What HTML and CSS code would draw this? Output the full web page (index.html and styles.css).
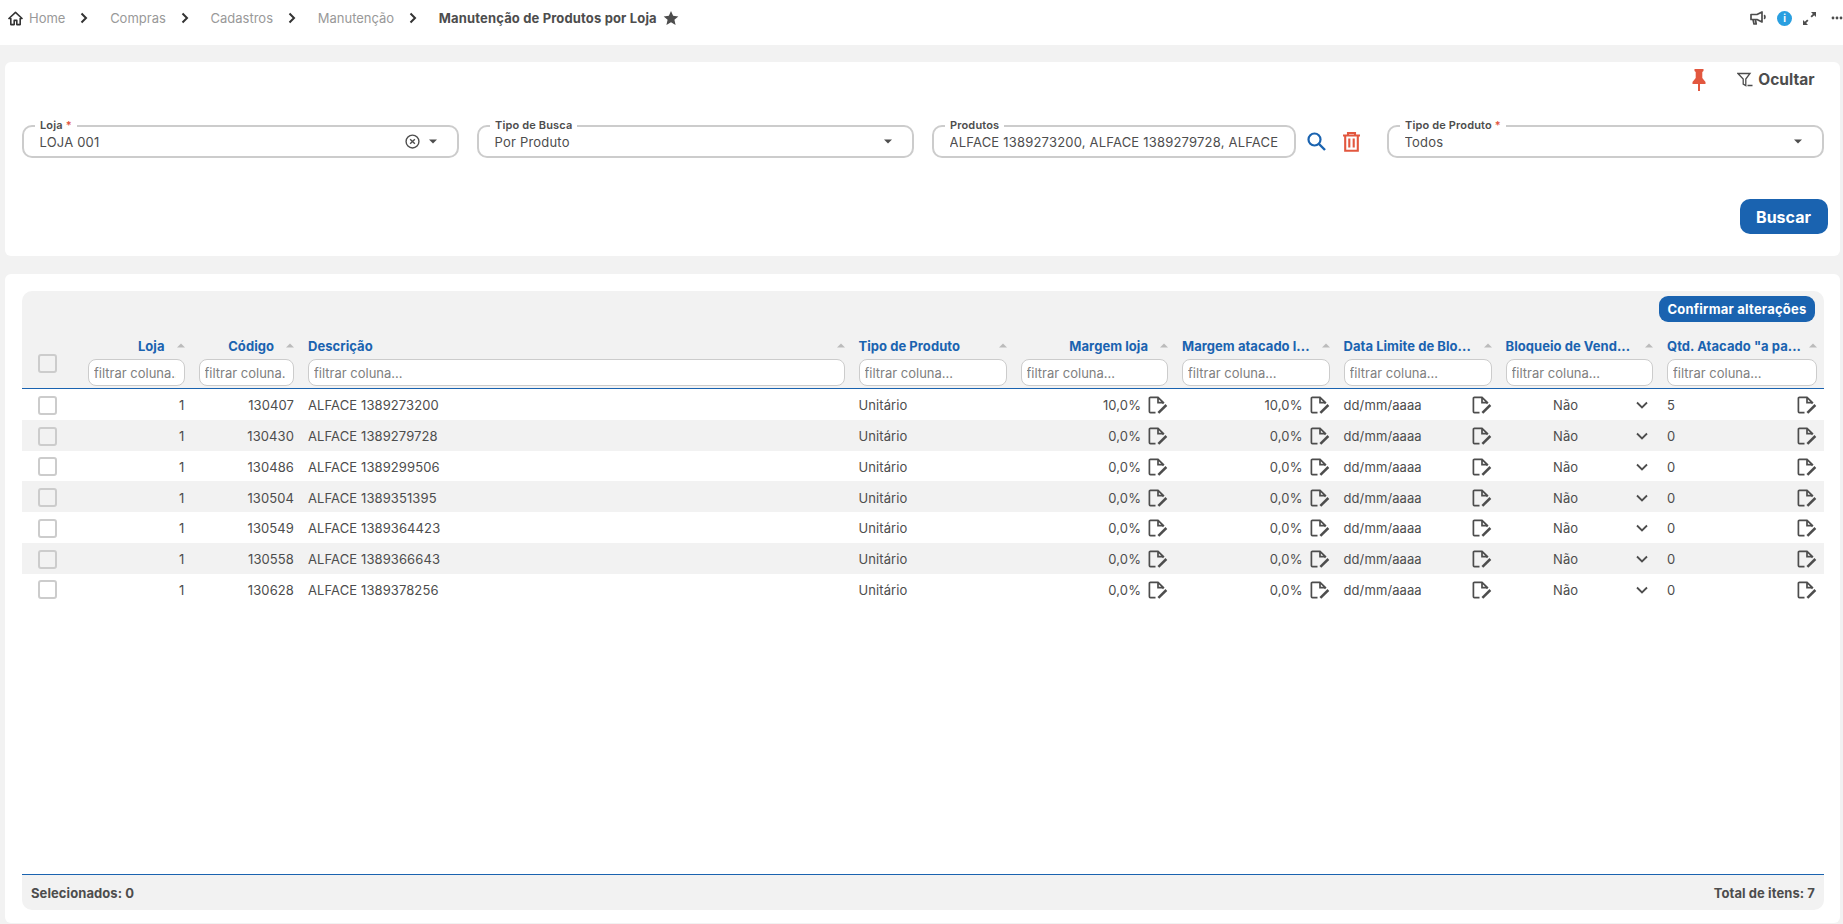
FILE: index.html
```html
<!DOCTYPE html>
<html lang="pt-BR">
<head>
<meta charset="utf-8">
<title>Manutenção de Produtos por Loja</title>
<link rel="stylesheet" href="styles.css">
</head>
<body>
<svg class="defs" width="0" height="0" aria-hidden="true">
  <symbol id="edit" viewBox="0 0 20 18">
    <path d="M7.5 16.6H2.4a1 1 0 0 1-1-1V2.4a1 1 0 0 1 1-1h7.6l5.4 5.2-1 1.2M10 1.6v5h5" fill="none" stroke="currentColor" stroke-width="1.7"/>
    <path d="M10.4 16.8L18.4 9" fill="none" stroke="currentColor" stroke-width="2.5"/>
  </symbol>
  <symbol id="sort" viewBox="0 0 8 5"><path d="M4 .5L8 4.5H0z" fill="currentColor"/></symbol>
  <symbol id="chev" viewBox="0 0 8 12"><path d="M1.5 1.5L6 6l-4.5 4.5" fill="none" stroke="currentColor" stroke-width="2"/></symbol>
  <symbol id="caret" viewBox="0 0 8 5"><path d="M0 .5h8L4 4.5z" fill="currentColor"/></symbol>
</svg>
<header class="topbar">
  <nav class="crumbs">
    <svg class="home" viewBox="0 0 16 16"><path d="M8 1.5L1 8h2v6.5h3.6V10h2.8v4.5H13V8h2z" fill="none" stroke="currentColor" stroke-width="1.7" stroke-linejoin="round"/></svg>
    <a class="crumb c-home">Home</a><svg class="chev"><use href="#chev"/></svg>
    <a class="crumb">Compras</a><svg class="chev"><use href="#chev"/></svg>
    <a class="crumb">Cadastros</a><svg class="chev"><use href="#chev"/></svg>
    <a class="crumb">Manutenção</a><svg class="chev"><use href="#chev"/></svg>
    <strong class="crumb-current">Manutenção de Produtos por Loja</strong>
    <svg class="star" viewBox="0 0 24 24"><path d="M12 1.5l3.2 7.3 7.8.8-5.9 5.2 1.8 7.7L12 18.4l-6.9 4.1 1.8-7.7L1 9.6l7.8-.8z" fill="currentColor"/></svg>
  </nav>
  <div class="top-actions">
    <svg class="ico-mega" viewBox="0 0 16 14"><path d="M1 3.5h6L12 1v10L7 8.5H1zM3 8.5l1 4.5h2.2L5.4 8.5M14 4.2c1.3.8 1.3 2.8 0 3.6" fill="none" stroke="currentColor" stroke-width="1.7" stroke-linejoin="round"/></svg>
    <span class="ico-info">i</span>
    <svg class="ico-expand" viewBox="0 0 15 15"><path d="M9 1h5v5l-1.8-1.8-2.4 2.4-1.3-1.3 2.4-2.4zM6 14H1V9l1.8 1.8 2.4-2.4 1.3 1.3-2.4 2.4z" fill="currentColor"/></svg>
    <svg class="ico-dots" viewBox="0 0 12 4"><circle cx="2" cy="2" r="1.4" fill="currentColor"/><circle cx="6" cy="2" r="1.4" fill="currentColor"/><circle cx="10" cy="2" r="1.4" fill="currentColor"/></svg>
  </div>
</header>

<main class="page">
  <section class="card filters">
    <div class="filter-head">
      <svg class="ico-pin" viewBox="0 0 14 22"><path d="M2.5 0h9v2l-1.2 1v6l3.2 4v2H8v7H6v-7H.5v-2l3.2-4V3L2.5 2z" fill="currentColor"/></svg>
      <button class="hide-btn" type="button">
        <svg class="ico-filter" viewBox="0 0 16 15"><path d="M1 1.5h12L8.8 7v6.5L6.2 12V7zM10.5 13.5h5" fill="none" stroke="currentColor" stroke-width="1.3"/></svg>
        Ocultar
      </button>
    </div>
    <div class="field-grid">
      <div class="field">
        <span class="field-label">Loja <i>*</i></span>
        <span class="field-value">LOJA 001</span>
        <svg class="ico-clear" viewBox="0 0 14 14"><circle cx="7" cy="7" r="6" fill="none" stroke="currentColor" stroke-width="1.3"/><path d="M4.8 4.8l4.4 4.4M9.2 4.8L4.8 9.2" stroke="currentColor" stroke-width="1.3"/></svg>
        <svg class="caret"><use href="#caret"/></svg>
      </div>
      <div class="field">
        <span class="field-label">Tipo de Busca</span>
        <span class="field-value">Por Produto</span>
        <svg class="caret"><use href="#caret"/></svg>
      </div>
      <div class="field-with-actions">
        <div class="field">
          <span class="field-label">Produtos</span>
          <span class="field-value">ALFACE 1389273200, ALFACE 1389279728, ALFACE</span>
        </div>
        <svg class="ico-search" viewBox="0 0 19 19"><circle cx="7.5" cy="7.5" r="6" fill="none" stroke="currentColor" stroke-width="2.2"/><path d="M12 12l6 6" stroke="currentColor" stroke-width="2.4"/></svg>
        <svg class="ico-trash" viewBox="0 0 19 20"><path d="M1 3.5h17M6 3V1h7v2M3.2 3.5v15.2h12.6V3.5M7.3 6.5v9M11.7 6.5v9" fill="none" stroke="currentColor" stroke-width="2.1"/></svg>
      </div>
      <div class="field">
        <span class="field-label">Tipo de Produto <i>*</i></span>
        <span class="field-value">Todos</span>
        <svg class="caret"><use href="#caret"/></svg>
      </div>
    </div>
    <div class="filter-foot"><button class="btn-search" type="button">Buscar</button></div>
  </section>

  <section class="card results">
    <div class="table">
      <div class="thead">
        <div class="toolbar"><button class="btn-confirm" type="button">Confirmar alterações</button></div>
        <div class="row-grid head-row">
          <div class="check-cell"><span class="check"></span></div>
          <div class="hcell"><div class="hlabel right"><span>Loja</span><svg class="sort"><use href="#sort"/></svg></div><input class="col-filter" placeholder="filtrar coluna..."></div>
          <div class="hcell"><div class="hlabel right"><span>Código</span><svg class="sort"><use href="#sort"/></svg></div><input class="col-filter" placeholder="filtrar coluna..."></div>
          <div class="hcell"><div class="hlabel"><span>Descrição</span><svg class="sort"><use href="#sort"/></svg></div><input class="col-filter" placeholder="filtrar coluna..."></div>
          <div class="hcell"><div class="hlabel"><span>Tipo de Produto</span><svg class="sort"><use href="#sort"/></svg></div><input class="col-filter" placeholder="filtrar coluna..."></div>
          <div class="hcell"><div class="hlabel right"><span>Margem loja</span><svg class="sort"><use href="#sort"/></svg></div><input class="col-filter" placeholder="filtrar coluna..."></div>
          <div class="hcell"><div class="hlabel"><span>Margem atacado l...</span><svg class="sort"><use href="#sort"/></svg></div><input class="col-filter" placeholder="filtrar coluna..."></div>
          <div class="hcell"><div class="hlabel"><span>Data Limite de Blo...</span><svg class="sort"><use href="#sort"/></svg></div><input class="col-filter" placeholder="filtrar coluna..."></div>
          <div class="hcell"><div class="hlabel"><span>Bloqueio de Vend...</span><svg class="sort"><use href="#sort"/></svg></div><input class="col-filter" placeholder="filtrar coluna..."></div>
          <div class="hcell"><div class="hlabel"><span>Qtd. Atacado "a pa...</span><svg class="sort"><use href="#sort"/></svg></div><input class="col-filter" placeholder="filtrar coluna..."></div>
        </div>
      </div>
      <div class="tbody" id="tbody">
        <div class="row-grid row"><div class="check-cell"><span class="check"></span></div><div class="cell num">1</div><div class="cell num">130407</div><div class="cell">ALFACE 1389273200</div><div class="cell">Unitário</div><div class="cell num edit"><span>10,0%</span><svg class="ico-edit"><use href="#edit"/></svg></div><div class="cell num edit"><span>10,0%</span><svg class="ico-edit"><use href="#edit"/></svg></div><div class="cell edit"><span>dd/mm/aaaa</span><svg class="ico-edit"><use href="#edit"/></svg></div><div class="cell sel"><span>Não</span><svg class="ico-down" viewBox="0 0 12 8"><path d="M1 1.5l5 5 5-5" fill="none" stroke="currentColor" stroke-width="1.8"/></svg></div><div class="cell edit"><span>5</span><svg class="ico-edit"><use href="#edit"/></svg></div></div>
        <div class="row-grid row"><div class="check-cell"><span class="check"></span></div><div class="cell num">1</div><div class="cell num">130430</div><div class="cell">ALFACE 1389279728</div><div class="cell">Unitário</div><div class="cell num edit"><span>0,0%</span><svg class="ico-edit"><use href="#edit"/></svg></div><div class="cell num edit"><span>0,0%</span><svg class="ico-edit"><use href="#edit"/></svg></div><div class="cell edit"><span>dd/mm/aaaa</span><svg class="ico-edit"><use href="#edit"/></svg></div><div class="cell sel"><span>Não</span><svg class="ico-down" viewBox="0 0 12 8"><path d="M1 1.5l5 5 5-5" fill="none" stroke="currentColor" stroke-width="1.8"/></svg></div><div class="cell edit"><span>0</span><svg class="ico-edit"><use href="#edit"/></svg></div></div>
        <div class="row-grid row"><div class="check-cell"><span class="check"></span></div><div class="cell num">1</div><div class="cell num">130486</div><div class="cell">ALFACE 1389299506</div><div class="cell">Unitário</div><div class="cell num edit"><span>0,0%</span><svg class="ico-edit"><use href="#edit"/></svg></div><div class="cell num edit"><span>0,0%</span><svg class="ico-edit"><use href="#edit"/></svg></div><div class="cell edit"><span>dd/mm/aaaa</span><svg class="ico-edit"><use href="#edit"/></svg></div><div class="cell sel"><span>Não</span><svg class="ico-down" viewBox="0 0 12 8"><path d="M1 1.5l5 5 5-5" fill="none" stroke="currentColor" stroke-width="1.8"/></svg></div><div class="cell edit"><span>0</span><svg class="ico-edit"><use href="#edit"/></svg></div></div>
        <div class="row-grid row"><div class="check-cell"><span class="check"></span></div><div class="cell num">1</div><div class="cell num">130504</div><div class="cell">ALFACE 1389351395</div><div class="cell">Unitário</div><div class="cell num edit"><span>0,0%</span><svg class="ico-edit"><use href="#edit"/></svg></div><div class="cell num edit"><span>0,0%</span><svg class="ico-edit"><use href="#edit"/></svg></div><div class="cell edit"><span>dd/mm/aaaa</span><svg class="ico-edit"><use href="#edit"/></svg></div><div class="cell sel"><span>Não</span><svg class="ico-down" viewBox="0 0 12 8"><path d="M1 1.5l5 5 5-5" fill="none" stroke="currentColor" stroke-width="1.8"/></svg></div><div class="cell edit"><span>0</span><svg class="ico-edit"><use href="#edit"/></svg></div></div>
        <div class="row-grid row"><div class="check-cell"><span class="check"></span></div><div class="cell num">1</div><div class="cell num">130549</div><div class="cell">ALFACE 1389364423</div><div class="cell">Unitário</div><div class="cell num edit"><span>0,0%</span><svg class="ico-edit"><use href="#edit"/></svg></div><div class="cell num edit"><span>0,0%</span><svg class="ico-edit"><use href="#edit"/></svg></div><div class="cell edit"><span>dd/mm/aaaa</span><svg class="ico-edit"><use href="#edit"/></svg></div><div class="cell sel"><span>Não</span><svg class="ico-down" viewBox="0 0 12 8"><path d="M1 1.5l5 5 5-5" fill="none" stroke="currentColor" stroke-width="1.8"/></svg></div><div class="cell edit"><span>0</span><svg class="ico-edit"><use href="#edit"/></svg></div></div>
        <div class="row-grid row"><div class="check-cell"><span class="check"></span></div><div class="cell num">1</div><div class="cell num">130558</div><div class="cell">ALFACE 1389366643</div><div class="cell">Unitário</div><div class="cell num edit"><span>0,0%</span><svg class="ico-edit"><use href="#edit"/></svg></div><div class="cell num edit"><span>0,0%</span><svg class="ico-edit"><use href="#edit"/></svg></div><div class="cell edit"><span>dd/mm/aaaa</span><svg class="ico-edit"><use href="#edit"/></svg></div><div class="cell sel"><span>Não</span><svg class="ico-down" viewBox="0 0 12 8"><path d="M1 1.5l5 5 5-5" fill="none" stroke="currentColor" stroke-width="1.8"/></svg></div><div class="cell edit"><span>0</span><svg class="ico-edit"><use href="#edit"/></svg></div></div>
        <div class="row-grid row"><div class="check-cell"><span class="check"></span></div><div class="cell num">1</div><div class="cell num">130628</div><div class="cell">ALFACE 1389378256</div><div class="cell">Unitário</div><div class="cell num edit"><span>0,0%</span><svg class="ico-edit"><use href="#edit"/></svg></div><div class="cell num edit"><span>0,0%</span><svg class="ico-edit"><use href="#edit"/></svg></div><div class="cell edit"><span>dd/mm/aaaa</span><svg class="ico-edit"><use href="#edit"/></svg></div><div class="cell sel"><span>Não</span><svg class="ico-down" viewBox="0 0 12 8"><path d="M1 1.5l5 5 5-5" fill="none" stroke="currentColor" stroke-width="1.8"/></svg></div><div class="cell edit"><span>0</span><svg class="ico-edit"><use href="#edit"/></svg></div></div>
      </div>
      <div class="tfoot"><span>Selecionados: 0</span><span>Total de itens: 7</span></div>
    </div>
  </section>
</main>
</body>
</html>
```
FILE: styles.css
```css
* { box-sizing: border-box; }
html, body { margin: 0; height: 924px; overflow: hidden; }
body { background: #f2f2f2; font-family: Inter, "Liberation Sans", sans-serif; font-size: 13px; color: #4d4d4d; }
.defs { position: absolute; }
button { font-family: inherit; border: 0; cursor: pointer; }

.topbar { height: 45px; background: #fff; display: flex; justify-content: space-between; align-items: center; padding: 0 0 9px 8px; }
.crumbs { display: flex; align-items: center; }
.home { width: 15px; height: 15px; color: #333; margin-right: 6px; }
.crumb { color: #999; }
.chev { width: 8px; height: 12px; color: #333; margin: 0 21.7px 0 15px; }
.crumb-current { font-weight: 700; color: #4d4d4d; letter-spacing: .15px; }
.star { width: 16px; height: 16px; margin-left: 6px; color: #4d4d4d; }
.top-actions { display: flex; align-items: center; color: #4d4d4d; }
.ico-mega { width: 16px; height: 14px; }
.ico-info { width: 15px; height: 15px; margin-left: 11px; border-radius: 50%; background: #2a9fe0; color: #fff; font-size: 10px; font-weight: 700; line-height: 15px; text-align: center; }
.ico-expand { width: 15px; height: 15px; margin-left: 10px; }
.ico-dots { width: 12px; height: 4px; margin-left: 14px; }

.page { padding: 0 3px 0 4.5px; }
.card { background: #fff; border-radius: 6px; }
.filters { margin-top: 17px; height: 194px; padding: 0 16.5px 0 17.5px; display: flex; flex-direction: column; }
.filter-head { height: 63px; padding: 7px 9px 0 0; display: flex; justify-content: flex-end; align-items: flex-start; }
.ico-pin { width: 14px; height: 22px; color: #e2573f; }
.hide-btn { display: flex; align-items: center; gap: 5px; margin-left: 31px; height: 20px; background: none; padding: 0; font-size: 15.5px; font-weight: 700; color: #4d4d4d; }
.ico-filter { width: 16px; height: 15px; }
.field-grid { display: grid; grid-template-columns: repeat(4, 1fr); gap: 18.5px; height: 33px; }
.field { position: relative; flex: 1; min-width: 0; height: 33px; border: 2px solid #ccc; border-radius: 10px; display: flex; align-items: center; padding: 0 13.5px 0 15.5px; background: #fff; }
.field-label { position: absolute; left: 11px; top: -9px; padding: 0 5px; background: #fff; font-size: 11px; font-weight: 600; letter-spacing: .15px; line-height: 14px; color: #4d4d4d; white-space: nowrap; }
.field-label i { color: #e2573f; font-style: normal; }
.field-value { flex: 1; min-width: 0; overflow: hidden; white-space: nowrap; font-size: 13px; letter-spacing: .2px; color: #4d4d4d; }
.ico-clear { width: 15px; height: 15px; margin-right: 9px; color: #4d4d4d; }
.caret { width: 8px; height: 5px; color: #4d4d4d; margin-right: 6px; }
.field-with-actions { display: flex; align-items: center; min-width: 0; }
.ico-search { width: 19px; height: 19px; margin-left: 11px; color: #1a63b0; flex: none; }
.ico-trash { width: 19px; height: 20px; margin-left: 16px; margin-right: 8px; color: #e2573f; flex: none; }
.filter-foot { display: flex; justify-content: flex-end; margin-top: 41px; margin-right: -4px; }
.btn-search { width: 88px; height: 35px; border-radius: 10px; background: #1a63b0; color: #fff; font-size: 16px; font-weight: 700; }

.results { margin-top: 18px; height: 649px; padding: 17px 16px 13px 17.5px; }
.table { height: 100%; display: flex; flex-direction: column; }
.thead { height: 98px; background: #f2f2f2; border-radius: 10px 10px 0 0; border-bottom: 1.5px solid #1a63b0; }
.toolbar { height: 44px; padding: 5px 9px 0 0; display: flex; justify-content: flex-end; align-items: flex-start; }
.btn-confirm { width: 156px; height: 26px; padding: 0; border-radius: 9px; background: #1a63b0; color: #fff; font-size: 13px; font-weight: 700; letter-spacing: .22px; }
.row-grid { display: grid; grid-template-columns: 59px 110.5px 109.5px 550.5px 162px 161.5px 161.5px 162px 161.5px 164px; }
.check-cell { display: flex; justify-content: flex-start; align-items: center; padding-left: 16px; }
.check { width: 19px; height: 19px; border: 2px solid #ccc; border-radius: 3px; }
.head-row .check-cell { align-items: flex-start; padding-top: 19px; }
.hcell { padding: 0 7px; min-width: 0; }
.hlabel { height: 24px; padding-bottom: 3px; display: flex; justify-content: space-between; align-items: center; font-weight: 700; letter-spacing: .05px; color: #1a63b0; white-space: nowrap; }
.hlabel.right span { margin-left: auto; margin-right: 12px; }
.sort { width: 8px; height: 5px; color: #bbb; flex: none; }
.col-filter { display: block; width: 100%; height: 27px; border: 1px solid #ccc; border-radius: 8px; padding: 0 8px 0 5px; background: #fff; font: 13px Inter, sans-serif; color: #4d4d4d; outline: 0; }
.col-filter::placeholder { color: #808080; opacity: 1; }

.tbody { flex: 1; }
.row { height: 30.75px; padding-top: 2px; }
.row:nth-child(even) { background: #f2f2f2; }
.cell { display: flex; align-items: center; padding: 0 7px; min-width: 0; white-space: nowrap; letter-spacing: .1px; }
.cell.num { justify-content: flex-end; }
.cell.edit { justify-content: space-between; }
.cell.num.edit { justify-content: flex-end; }
.cell.sel { padding-left: 54.5px; justify-content: space-between; padding-right: 12px; }
.ico-edit { width: 20px; height: 18px; color: #4d4d4d; flex: none; }
.cell.num.edit .ico-edit { margin-left: 7px; }
.ico-down { width: 12px; height: 8px; color: #4d4d4d; }

.tfoot { height: 36px; background: #f2f2f2; border-top: 1.5px solid #1a63b0; border-radius: 0 0 10px 10px; display: flex; justify-content: space-between; align-items: center; padding: 0 9px; font-weight: 700; letter-spacing: .08px; color: #4d4d4d; }
```
